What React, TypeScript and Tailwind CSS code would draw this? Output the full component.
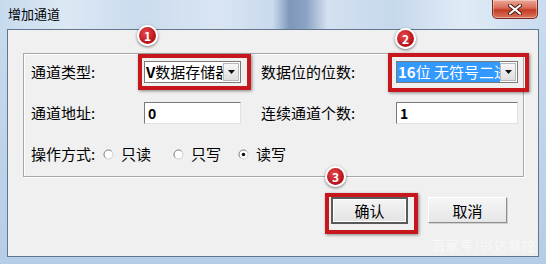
import React from "react";

const font = "font-['Noto_Sans_CJK_SC','Noto_Sans',sans-serif]";

const Badge = ({ n, className }: { n: string; className: string }) => (
  <span
    className={`absolute w-[21px] h-[21px] rounded-full border-2 border-white
    bg-[radial-gradient(circle_at_40%_35%,#e8474a,#b3121a_70%)]
    shadow-[0_1px_3px_rgba(0,0,0,0.55)]
    flex items-center justify-center text-white text-[12px] font-bold leading-none ${className}`}
  >
    {n}
  </span>
);

const RedBox = ({ className }: { className: string }) => (
  <span
    className={`absolute border-[4px] border-[#c8161d] shadow-[1px_1px_3px_rgba(0,0,0,0.45)] pointer-events-none ${className}`}
  />
);

const DropButton = () => (
  <span className="w-[16px] h-[18px] mr-[1px] flex items-center justify-center bg-[linear-gradient(#f6f6f6,#dedede)] border border-[#b8b8b8]">
    <svg width="7" height="4" viewBox="0 0 7 4">
      <path d="M0 0h7L3.5 4z" fill="#111" />
    </svg>
  </span>
);

const Radio = ({ checked }: { checked?: boolean }) => (
  <svg width="11" height="11" viewBox="0 0 11 11" className="mr-[7px]">
    <circle cx="5.5" cy="5.5" r="4.5" fill="#fff" stroke="#cfcfcf" strokeWidth="1" />
    <path d="M2.3 8.7A4.5 4.5 0 0 1 8.7 2.3" fill="none" stroke="#8a8a8a" strokeWidth="1" />
    {checked && <circle cx="5.5" cy="5.5" r="1.8" fill="#111" />}
  </svg>
);

const Input = ({ value }: { value: string }) => (
  <div className="h-[22px] bg-white border-t border-l border-t-[#7a7a7a] border-l-[#7a7a7a] border-b border-r border-b-[#e2e2e2] border-r-[#e2e2e2] flex items-center pl-[3px] text-[14px] font-bold text-black">
    {value}
  </div>
);

export default function App() {
  return (
    <div className={`w-[546px] h-[264px] overflow-hidden relative bg-[linear-gradient(#c9dcef,#b6cde6)] ${font}`}>
      {/* Title bar */}
      <div className="h-[29px] flex items-start justify-between bg-[linear-gradient(90deg,#c6daee_0%,#dce8f4_12%,#cbdcee_25%,#d9e5f2_40%,#c9daee_50%,#7f98bb_53%,#8aa2c3_56%,#d3e1f1_60%,#c6d8ec_72%,#e1ebf6_85%,#c8dbef_100%)]">
        <span className="pl-[8px] pt-[5px] text-[13px] text-black leading-[18px]">增加通道</span>
        <button className="mr-[8px] w-[46px] h-[19px] rounded-b-[5px] border border-t-0 border-[#7a2a22] bg-[linear-gradient(#eba898_0%,#d96a55_45%,#c43a22_55%,#d9775f_100%)] flex items-center justify-center shadow-[inset_0_0_0_1px_rgba(255,255,255,0.35)]">
          <svg width="14" height="11" viewBox="0 0 14 11">
            <path d="M2 1.5L12 9.5M12 1.5L2 9.5" stroke="#4a1a12" strokeWidth="4" strokeLinecap="round" />
            <path d="M2 1.5L12 9.5M12 1.5L2 9.5" stroke="#fff" strokeWidth="2.2" strokeLinecap="round" />
          </svg>
        </button>
      </div>

      {/* Client area */}
      <div className="mx-[7px] h-[228px] border border-[#62768d] bg-[#f0f0f0] pl-[15px] pt-[23px] text-[15px] text-black">
        {/* Group box */}
        <div className="w-[501px] h-[124px] border border-[#a7a7a7] shadow-[1px_1px_0_#fff,inset_1px_1px_0_#fff] pl-[7px] pt-[7px] flex flex-col">
          <div className="h-[22px] flex items-center">
            <span className="w-[113px]">通道类型:</span>
            <div className="relative w-[97px] h-[22px] bg-white border border-[#7a7a7a] flex items-center">
              <span className="flex-1 overflow-hidden whitespace-nowrap pl-[1px] text-[15px] leading-[20px]">
                <b className="font-bold">V</b>数据存储器
              </span>
              <DropButton />
              <RedBox className="-left-[7px] -right-[11px] -top-[8px] -bottom-[8px]" />
              <Badge n="1" className="-left-[8px] -top-[37px]" />
            </div>
            <span className="ml-[20px] w-[135px]">数据位的位数:</span>
            <div className="relative w-[122px] h-[22px] bg-white border border-[#7a7a7a] flex items-center">
              <span className="flex-1 h-[20px] overflow-hidden whitespace-nowrap bg-[#3399ff] text-white text-[15px] leading-[20px] pl-[1px]">
                <b className="font-bold">16</b>位 无符号二进制
              </span>
              <DropButton />
              <RedBox className="-left-[9px] -right-[12px] -top-[9px] -bottom-[10px]" />
              <Badge n="2" className="-left-[2px] -top-[34px]" />
            </div>
          </div>

          <div className="mt-[19px] h-[22px] flex items-center">
            <span className="w-[113px]">通道地址:</span>
            <div className="w-[97px]">
              <Input value="0" />
            </div>
            <span className="ml-[20px] w-[135px]">连续通道个数:</span>
            <div className="w-[122px]">
              <Input value="1" />
            </div>
          </div>

          <div className="mt-[19px] h-[22px] flex items-center">
            <span className="w-[72px]">操作方式:</span>
            <label className="flex items-center w-[70px]">
              <Radio />
              只读
            </label>
            <label className="flex items-center w-[65px]">
              <Radio />
              只写
            </label>
            <label className="flex items-center">
              <Radio checked />
              读写
            </label>
          </div>
        </div>

        {/* Buttons */}
        <div className="mt-[20px] flex pl-[308px] gap-[20px]">
          <div className="relative">
            <button className="w-[77px] h-[27px] border-2 border-[#5a5a5a] bg-[linear-gradient(#f4f4f4,#e3e3e3)] shadow-[inset_0_0_0_1px_#fff] text-[15px] leading-none">
              确认
            </button>
            <RedBox className="-left-[6px] -right-[10px] -top-[4px] -bottom-[10px]" />
            <Badge n="3" className="-left-[6px] -top-[31px]" />
          </div>
          <button className="w-[79px] h-[26px] border border-t-white border-l-white border-b-[#8d8d8d] border-r-[#8d8d8d] shadow-[1px_1px_0_#d0d0d0] bg-[linear-gradient(#f6f6f6,#e6e6e6)] text-[15px] leading-none">
            取消
          </button>
        </div>
      </div>

      {/* Watermark */}
      <span className="absolute right-[10px] bottom-[10px] text-[13px] text-white/60 tracking-[1px]">
        百家号/兴达易控
      </span>
    </div>
  );
}
